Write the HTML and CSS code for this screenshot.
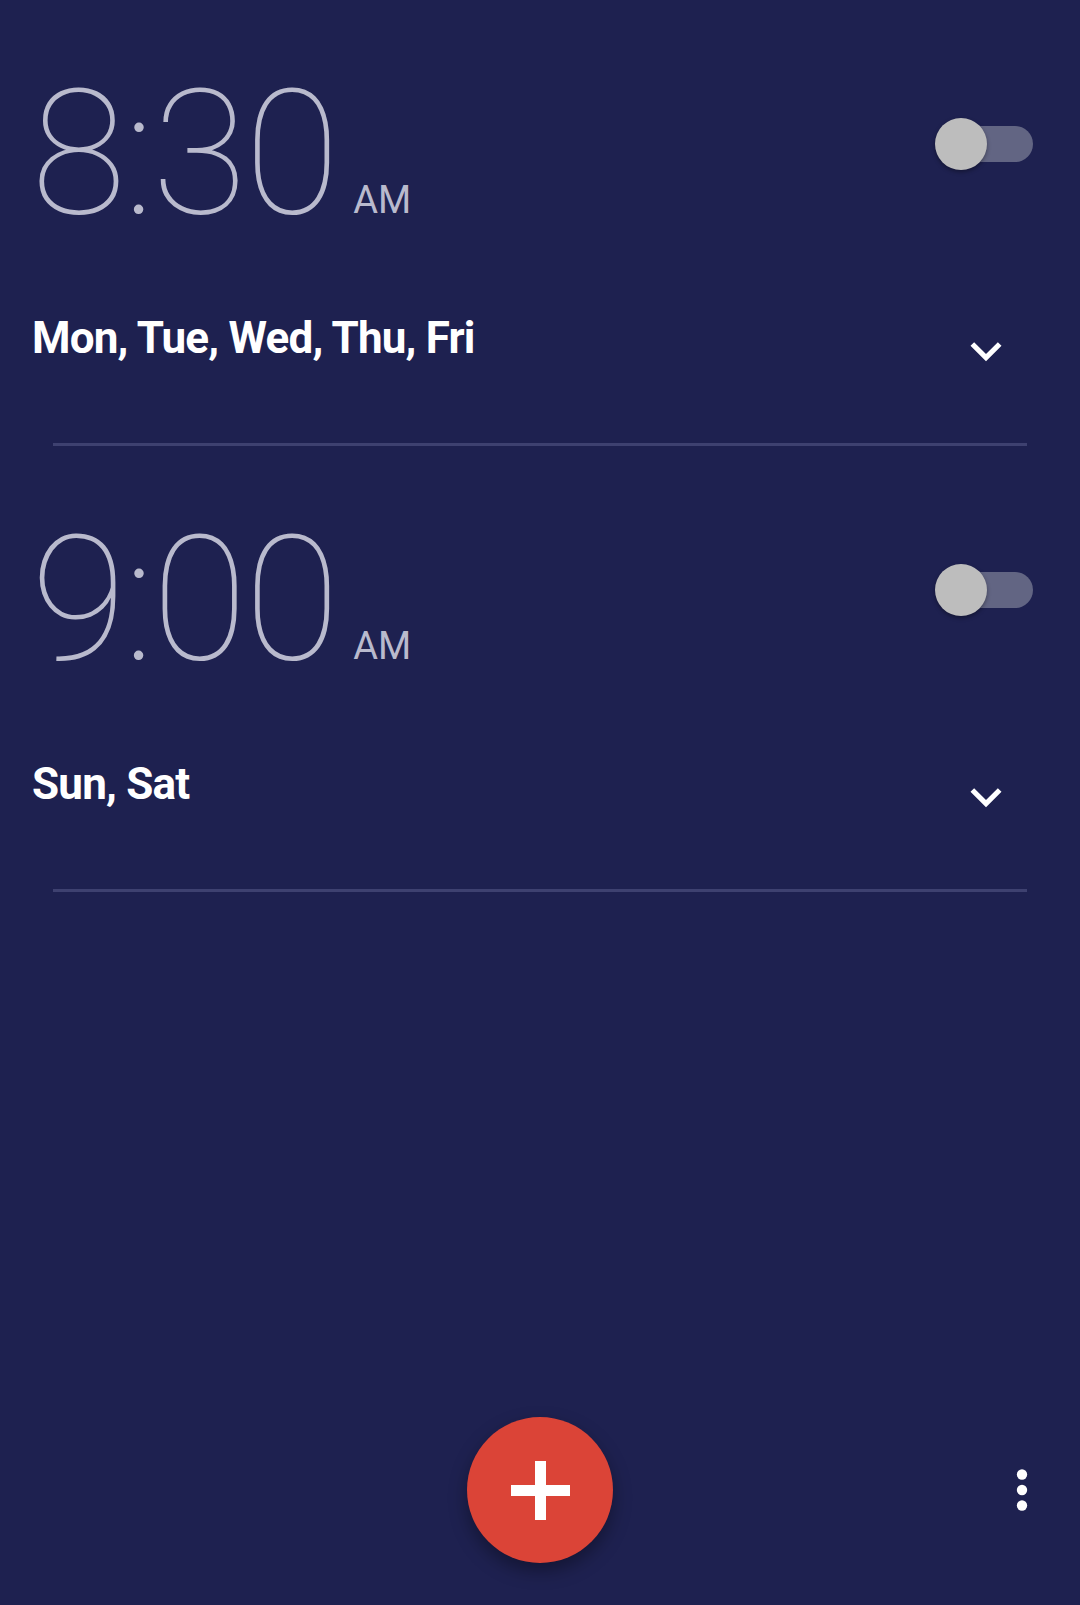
FILE: index.html
```html
<!DOCTYPE html>
<html>
<head>
<meta charset="utf-8">
<link rel="stylesheet" href="styles.css">
</head>
<body>
<div class="screen">
  <div class="alarms">
    <div class="alarm">
      <div class="top">
        <div class="time"><span class="digits">8:30</span><span class="ampm">AM</span></div>
        <div class="switch"><div class="track"></div><div class="thumb"></div></div>
      </div>
      <div class="days-row">
        <div class="days">Mon, Tue, Wed, Thu, Fri</div>
        <svg class="chevron" viewBox="0 0 24 24"><path d="M16.59 8.59L12 13.17 7.41 8.59 6 10l6 6 6-6z" fill="#fff"/></svg>
      </div>
      <div class="divider"></div>
    </div>
    <div class="alarm">
      <div class="top">
        <div class="time"><span class="digits">9:00</span><span class="ampm">AM</span></div>
        <div class="switch"><div class="track"></div><div class="thumb"></div></div>
      </div>
      <div class="days-row">
        <div class="days">Sun, Sat</div>
        <svg class="chevron" viewBox="0 0 24 24"><path d="M16.59 8.59L12 13.17 7.41 8.59 6 10l6 6 6-6z" fill="#fff"/></svg>
      </div>
      <div class="divider"></div>
    </div>
  </div>
  <div class="bottom-bar">
    <div class="spacer"></div>
    <div class="fab">
      <svg class="plus" viewBox="0 0 59 59"><rect x="24" y="0" width="11" height="59" fill="#fff"/><rect x="0" y="24" width="59" height="11" fill="#fff"/></svg>
    </div>
    <svg class="more" viewBox="0 0 24 24"><circle cx="12" cy="6" r="2" fill="#fff"/><circle cx="12" cy="12" r="2" fill="#fff"/><circle cx="12" cy="18" r="2" fill="#fff"/></svg>
  </div>
</div>
</body>
</html>
```

FILE: styles.css
```css
* { box-sizing: border-box; }
html, body {
  margin: 0;
  padding: 0;
  background: #1e2150;
}
.screen {
  width: 1080px;
  height: 1605px;
  display: flex;
  flex-direction: column;
  background: #1e2150;
  font-family: Roboto, "Noto Sans", sans-serif;
  overflow: hidden;
}
.alarm {
  height: 446px;
  display: flex;
  flex-direction: column;
}
.top {
  display: flex;
  justify-content: space-between;
  align-items: flex-start;
  padding-top: 65px;
  padding-left: 31px;
  padding-right: 47px;
}
.time {
  line-height: 177px;
  height: 177px;
  color: #b9bacd;
  white-space: nowrap;
}
.digits {
  font-size: 174px;
  font-weight: 100;
  letter-spacing: -2.6px;
}
.ampm {
  font-size: 38px;
  font-weight: 400;
  margin-left: 16px;
}
.switch {
  position: relative;
  width: 98px;
  height: 52px;
  margin-top: 53px;
}
.track {
  position: absolute;
  right: 0;
  top: 8px;
  width: 84px;
  height: 36px;
  border-radius: 18px;
  background: #626583;
}
.thumb {
  position: absolute;
  left: 0;
  top: 0;
  width: 52px;
  height: 52px;
  border-radius: 50%;
  background: #bdbdbd;
  box-shadow: 0 2px 4px rgba(0, 0, 0, 0.35);
}
.days-row {
  display: flex;
  justify-content: space-between;
  align-items: flex-start;
  margin-top: 70px;
  padding-left: 32px;
  padding-right: 63px;
}
.days {
  font-size: 44px;
  font-weight: 700;
  line-height: 53px;
  letter-spacing: -0.8px;
  color: #ffffff;
}
.chevron {
  width: 62px;
  height: 62px;
  margin-top: 8px;
}
.divider {
  margin-top: auto;
  margin-left: 53px;
  margin-right: 53px;
  height: 3px;
  background: #3e4170;
}
.bottom-bar {
  margin-top: auto;
  display: grid;
  grid-template-columns: 1fr 146px 1fr;
  align-items: center;
  padding-bottom: 42px;
}
.fab {
  width: 146px;
  height: 146px;
  border-radius: 50%;
  background: #db4437;
  display: flex;
  align-items: center;
  justify-content: center;
  box-shadow: 0 8px 18px rgba(0, 0, 0, 0.35);
}
.plus {
  width: 59px;
  height: 59px;
}
.more {
  justify-self: end;
  width: 62px;
  height: 62px;
  margin-right: 27px;
}
```
